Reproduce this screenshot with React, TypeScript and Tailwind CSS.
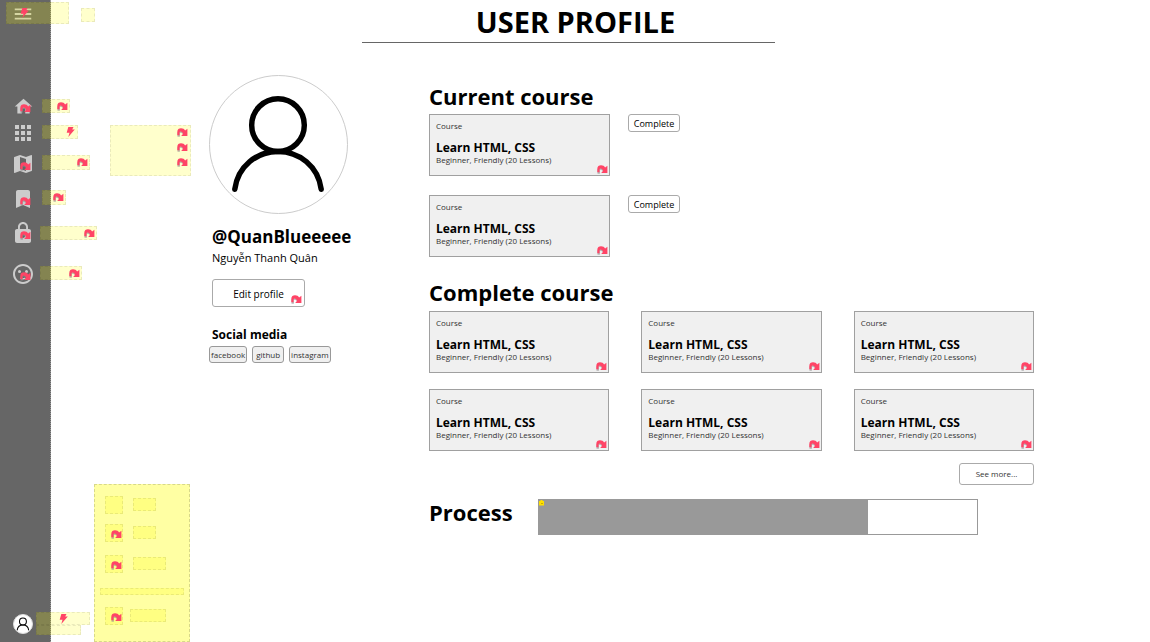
import type { ReactNode } from 'react';
import {
  MdApps,
  MdBookmark,
  MdHome,
  MdLock,
  MdMap,
  MdMenu,
  MdSentimentSatisfied,
} from 'react-icons/md';

function Jump({ className = '' }: { className?: string }) {
  return (
    <svg viewBox="0 0 11 9" aria-hidden="true" className={`h-[9px] w-[11px] ${className}`}>
      <path d="M1.700 8.800V5.500C1.700 3 5 2.500 7 5.500" fill="none" stroke="#8a8a8a" strokeOpacity=".6" strokeWidth="2.400" />
      <path
        d="M.3 7.200V4C.3 1.300 2 .3 4 .3c2 0 3.300.7 4.100 2.200L10.400.8V8H4.200l1.900-2.200C5.300 4.200 4.300 3.400 3.400 3.600 2.700 3.800 2.500 4.600 2.500 5.400v1.800z"
        fill="#ff4466"
      />
    </svg>
  );
}

function Bolt({ className = '' }: { className?: string }) {
  return (
    <svg viewBox="0 0 9 10" aria-hidden="true" className={`h-[10px] w-[9px] ${className}`}>
      <path d="M2.300 0H7.500L6.200 2.600H8.800L2.300 10 3.500 5.800H.7z" fill="#ff4466" />
    </svg>
  );
}

function Hotspot({ className, children }: { className: string; children?: ReactNode }) {
  return (
    <span className={`border border-dashed border-black/8 bg-[#ffff00]/20 ${className}`}>{children}</span>
  );
}

function Person({ className, stroke }: { className: string; stroke: number }) {
  return (
    <svg viewBox="0 0 138 138" aria-hidden="true" className={className}>
      <g fill="none" stroke="#000" strokeWidth={stroke} strokeLinecap="round">
        <circle cx="68.500" cy="49.500" r="26.500" />
        <path d="M25 114C28 91 47 76 68.500 76s40.500 15 43.500 38" />
      </g>
    </svg>
  );
}

const navItems = [
  {
    label: 'Home',
    icon: <MdHome size={21} />,
    row: 'h-[26px]',
    mark: 'left-[42px] top-[6px] h-[14px] w-[28px]',
    signal: <Jump className="ml-auto mr-px" />,
    over: true,
  },
  {
    label: 'Apps',
    icon: <MdApps size={24} />,
    row: 'h-[28px]',
    mark: 'left-[42px] top-[6px] h-[14px] w-[36px]',
    signal: <Bolt className="ml-auto mr-[2px]" />,
    over: false,
  },
  {
    label: 'Map',
    icon: <MdMap size={24} />,
    row: 'h-[34px]',
    mark: 'left-[42px] top-[8px] h-[15px] w-[48px]',
    signal: <Jump className="ml-auto mr-px" />,
    over: true,
  },
  {
    label: 'Bookmarks',
    icon: <MdBookmark size={24} />,
    row: 'h-[36px]',
    mark: 'left-[42px] top-[9px] h-[15px] w-[24px]',
    signal: <Jump className="ml-auto mr-px" />,
    over: true,
  },
  {
    label: 'Privacy',
    icon: <MdLock size={24} />,
    row: 'h-[32px]',
    mark: 'left-[40px] top-[9px] h-[14px] w-[57px]',
    signal: <Jump className="ml-auto mr-px" />,
    over: true,
  },
  {
    label: 'Feedback',
    icon: <MdSentimentSatisfied size={24} />,
    row: 'h-[50px]',
    mark: 'left-[40px] top-[17px] h-[14px] w-[42px]',
    signal: <Jump className="ml-auto mr-px" />,
    over: true,
  },
];

function Sidebar() {
  return (
    <aside className="relative z-10 flex min-h-full w-[51px] shrink-0 flex-col border-r border-dotted border-[#999] bg-[#666] text-[#ccc]">
      <button aria-label="Menu" className="relative flex h-[28px] w-[46px] items-center justify-center">
        <MdMenu size={22} />
        <Hotspot className="absolute left-[6px] top-[2px] h-[22px] w-[63px]" />
        <Bolt className="absolute left-[20px] top-[8px]" />
      </button>
      <Hotspot className="absolute left-[81px] top-[8px] h-[14px] w-[14px]" />
      <nav className="mt-[65px]">
        <ul>
          {navItems.map((item) => (
            <li key={item.label} className={`relative flex w-[46px] ${item.row}`}>
              <a href="#" aria-label={item.label} className="flex w-full items-center justify-center">
                {item.icon}
                {item.over && <Jump className="absolute left-[20px] top-1/2 -mt-[2px]" />}
              </a>
              <Hotspot className={`absolute flex items-center ${item.mark}`}>{item.signal}</Hotspot>
            </li>
          ))}
        </ul>
      </nav>
      <div className="relative mb-[8px] mt-auto flex w-[46px] justify-center">
        <a href="#" aria-label="Account" className="flex size-[20px] rounded-full border border-[#ddd] bg-white">
          <Person className="size-full" stroke={8} />
        </a>
        <Hotspot className="absolute left-[36px] top-[-2px] flex h-[13px] w-[54px] items-center justify-center">
          <Bolt />
        </Hotspot>
        <Hotspot className="absolute left-[36px] top-[11px] h-[10px] w-[45px]" />
      </div>
    </aside>
  );
}

const panelRows = [
  { mark: false, gap: 'gap-[10px]', width: 'w-[23px]', row: 'h-[18px] mb-[10px]' },
  { mark: true, gap: 'gap-[10px]', width: 'w-[23px]', row: 'h-[18px] mb-[13px]' },
  { mark: true, gap: 'gap-[10px]', width: 'w-[33px]', row: 'h-[18px] mb-[15px]' },
];

function PanelRow({ mark, gap, width, row }: { mark: boolean; gap: string; width: string; row: string }) {
  return (
    <div className={`ml-[5px] flex items-start ${gap} ${row}`}>
      <Hotspot className="flex size-[18px] items-end justify-end">{mark && <Jump className="mb-[2px]" />}</Hotspot>
      <Hotspot className={`mt-[2px] h-[13px] ${width}`} />
    </div>
  );
}

function Overlays() {
  return (
    <>
      <Hotspot className="absolute left-[110px] top-[125px] flex h-[51px] w-[81px] flex-col items-end gap-[6px] pr-[2px] pt-[2px]">
        <Jump />
        <Jump />
        <Jump />
      </Hotspot>
      <div className="absolute bottom-0 left-[94px] w-[96px] border border-dashed border-black/15 bg-[#ffff00]/36 px-[5px] pb-[16px] pt-[11px]">
        {panelRows.map((r, i) => (
          <PanelRow key={i} {...r} />
        ))}
        <Hotspot className="block h-[7px]" />
        <div className="mt-[12px]">
          <PanelRow mark gap="gap-[7px]" width="w-[36px]" row="h-[18px]" />
        </div>
      </div>
    </>
  );
}

function CourseCard() {
  return (
    <article className="relative h-[62px] border border-[#a0a0a0] bg-[#f0f0f0] px-[6px] pt-[5px]">
      <p className="text-[8px] leading-[12px] text-[#333]">Course</p>
      <h3 className="mt-[8px] text-[12px] font-bold leading-[15px]">Learn HTML, CSS</h3>
      <p className="text-[8px] leading-[9px] text-[#333]">Beginner, Friendly (20 Lessons)</p>
      <Jump className="absolute bottom-px right-px" />
    </article>
  );
}

function Profile() {
  return (
    <section className="w-[142px] shrink-0">
      <div className="size-[139px] rounded-full border border-[#ccc]">
        <Person className="size-full" stroke={5.5} />
      </div>
      <div className="pl-[3px]">
        <h2 className="mt-[11px] whitespace-nowrap text-[17px] font-bold leading-[24px]">@QuanBlueeeee</h2>
        <p className="text-[11px] leading-[18px]">Nguyễn Thanh Quân</p>
        <button className="relative mt-[12px] h-[28px] w-[93px] rounded-[3px] border border-[#aaa] bg-white pt-[2px] text-[10px]">
          Edit profile
          <Jump className="absolute bottom-[2px] right-[2px]" />
        </button>
        <h3 className="mt-[19px] text-[12px] font-bold leading-[18px]">Social media</h3>
      </div>
      <div className="mt-[2px] flex gap-[5px]">
        {['facebook', 'github', 'instagram'].map((name) => (
          <button
            key={name}
            className="h-[17px] rounded-[3px] border border-[#999] bg-[#f0f0f0] px-px text-[8px] leading-[15px] text-[#333] [&:nth-child(2)]:px-[3px]"
          >
            {name}
          </button>
        ))}
      </div>
    </section>
  );
}

export default function App() {
  return (
    <div className="relative flex min-h-screen bg-white font-['Open_Sans','Noto_Sans',sans-serif] text-black">
      <Sidebar />
      <main className="min-w-0 flex-1">
        <header className="ml-[311px] w-[413px] border-b border-[#666] pl-[14px] pt-[2px] text-center">
          <h1 className="text-[29px] font-bold leading-[40px]">USER PROFILE</h1>
        </header>
        <div className="flex gap-[78px] pl-[158px] pr-[16px] pt-[32px]">
          <Profile />
          <div className="min-w-0 max-w-[605px] flex-1 pt-[6px]">
            <section>
              <h2 className="pb-[2px] text-[22px] font-bold leading-[31px]">Current course</h2>
              <div className="flex flex-col gap-[19px]">
                {[1, 2].map((n) => (
                  <div key={n} className="flex items-start gap-[18px]">
                    <div className="w-[181px]">
                      <CourseCard />
                    </div>
                    <button className="h-[18px] w-[52px] rounded-[3px] border border-[#aaa] bg-white pt-px text-[9px] leading-[16px]">
                      Complete
                    </button>
                  </div>
                ))}
              </div>
            </section>
            <section className="mt-[20px]">
              <h2 className="pb-[3px] text-[22px] font-bold leading-[31px]">Complete course</h2>
              <div className="grid grid-cols-3 gap-x-8 gap-y-4">
                {[1, 2, 3, 4, 5, 6].map((n) => (
                  <CourseCard key={n} />
                ))}
              </div>
              <button className="ml-auto mt-[12px] block h-[22px] w-[75px] rounded-[3px] border border-[#aaa] bg-white text-[8px] text-[#333]">
                See more...
              </button>
            </section>
            <section className="mt-[14px] flex items-start gap-[24px]">
              <h2 className="w-[85px] text-[22px] font-bold leading-[26px]">Process</h2>
              <div
                role="progressbar"
                aria-label="Process"
                aria-valuenow={75}
                className="relative h-[36px] w-[440px] border border-[#999] bg-white"
              >
                <div className="h-full w-3/4 bg-[#999]" />
                <svg viewBox="0 0 6 6" aria-hidden="true" className="absolute left-0 top-0 size-[6px]">
                  <path d="M0 1H1.500V0H3.500V1H5V5.500H0z" fill="#ffe000" />
                  <path d="M2 3.500H4" stroke="#957c00" strokeWidth=".5" />
                </svg>
              </div>
            </section>
          </div>
        </div>
      </main>
      <Overlays />
    </div>
  );
}
